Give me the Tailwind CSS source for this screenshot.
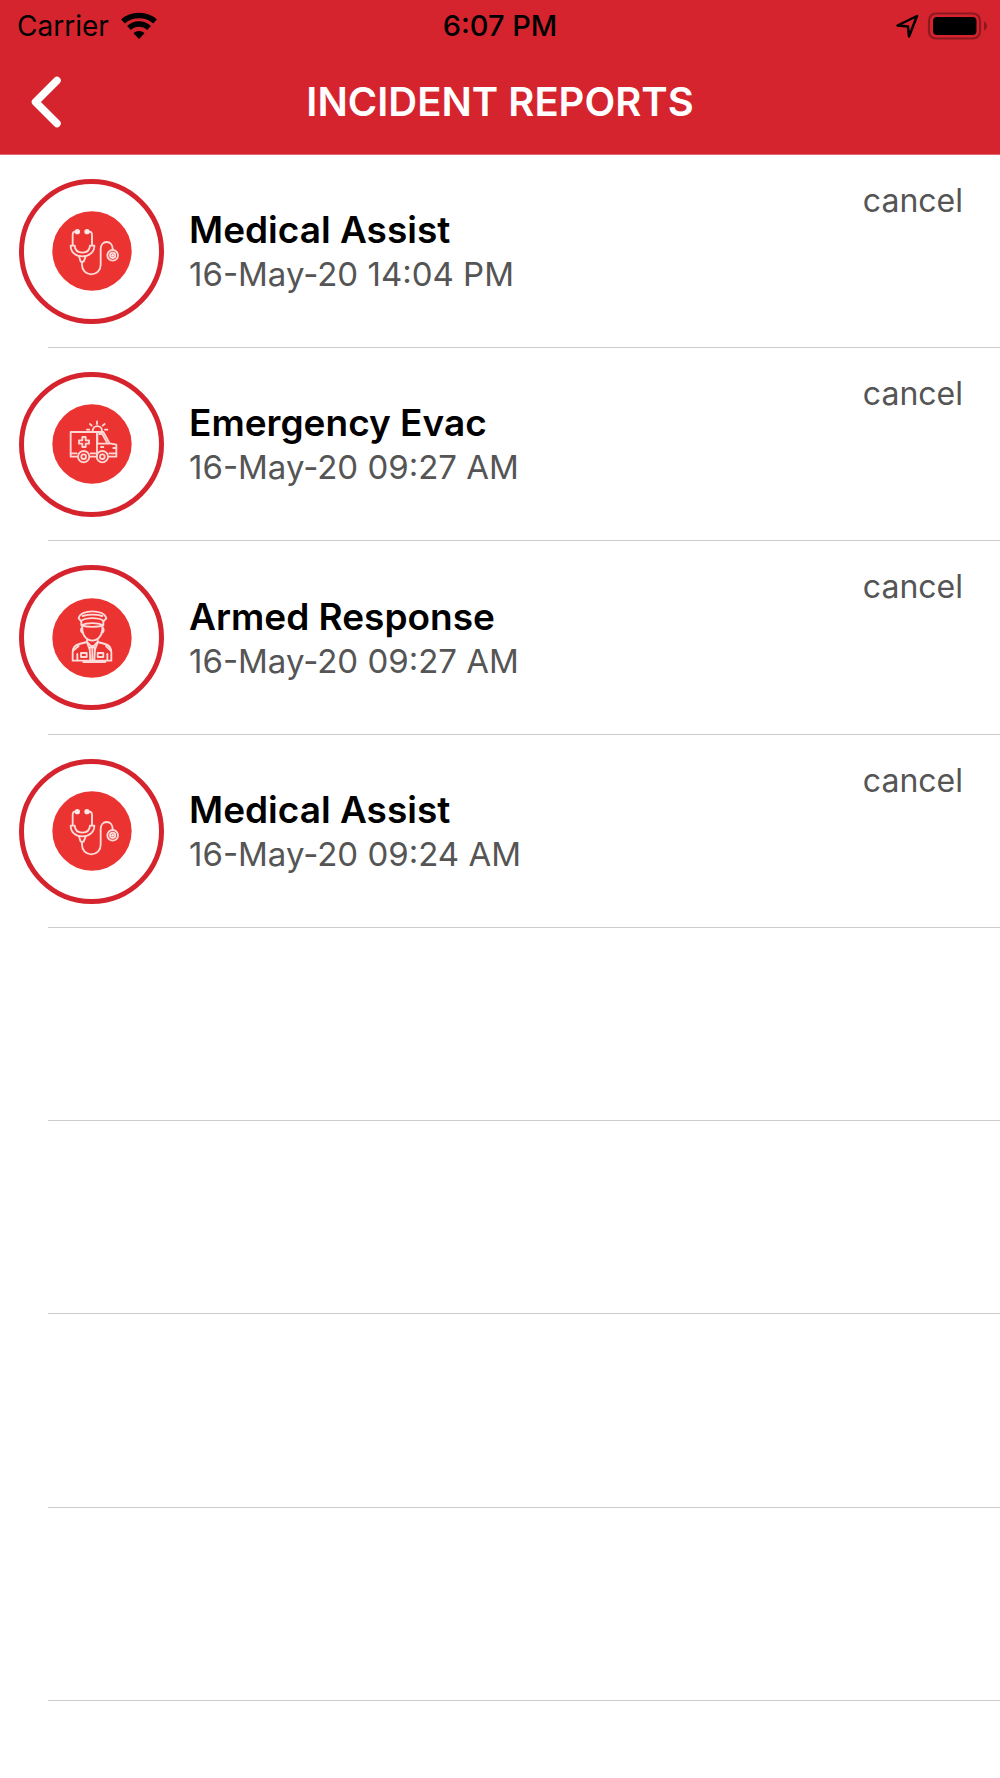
<!DOCTYPE html>
<html lang="en">
<head>
<meta charset="utf-8">
<meta name="viewport" content="width=device-width, initial-scale=1">
<title>Incident Reports</title>
<script src="https://cdn.jsdelivr.net/npm/@tailwindcss/browser@4"></script>
</head>
<body class="min-h-screen overflow-x-hidden bg-white font-[Inter,sans-serif] text-black">

<!-- Shared icon artwork -->
<svg class="hidden" aria-hidden="true">
  <symbol id="stethoscope" viewBox="36 35 240 240">
    <circle cx="156" cy="155" r="119" fill="#eb3431"/>
    <g fill="none" stroke="#ffdcda" stroke-width="5.500" stroke-linecap="round" stroke-linejoin="round">
      <path d="M110 97H105Q98 97 98 107V138M142 97H148Q156 97 156 107V138"/>
      <path d="M92 139H104C105 153 114 160 127 160S149 153 150 139H163C163 158 148 171 127 171S92 158 92 139Z"/>
      <path d="M117 171L122 187H131L137 171M126 188V196C126 213 138 225 154 225S182 213 182 196V149C182 137 189 128 200 128S218 137 218 149V151"/>
      <circle cx="218" cy="168" r="16"/><circle cx="218" cy="168" r="8"/>
    </g>
    <g fill="#ffe9e8"><circle cx="112" cy="97" r="8"/><circle cx="141" cy="97" r="8"/><circle cx="218" cy="168" r="4"/></g>
  </symbol>
  <symbol id="ambulance" viewBox="36 30 240 240">
    <circle cx="156" cy="150" r="119" fill="#eb3431"/>
    <g fill="none" stroke="#ffd8d5" stroke-width="5.500" stroke-linecap="round" stroke-linejoin="round">
      <path d="M112 188H92V114H171V188H150M170 114H190L209 148L229 152V188H206M150 188H168"/>
      <path d="M172 120V149H207M178 120H187L202 148M92 178H110M152 178H166M208 178H228"/>
      <path d="M127 129H137V139H147V149H137V159H127V149H117V139H127Z"/>
      <path d="M158 112C158 91 186 91 186 112M171 90V82M155 95L150 90M188 95L194 90M148 107H141M195 107H202"/>
      <path d="M183 159H190M220 162H228"/>
      <circle cx="131" cy="188" r="17"/><circle cx="131" cy="188" r="7"/>
      <circle cx="187" cy="188" r="17"/><circle cx="187" cy="188" r="7"/>
    </g>
  </symbol>
  <symbol id="officer" viewBox="36 30 240 240">
    <circle cx="156" cy="150" r="119" fill="#eb3431"/>
    <g fill="none" stroke="#ffdcda" stroke-width="5.500" stroke-linecap="round" stroke-linejoin="round">
      <path d="M124 100L116 91C119 76 139 70 157 70S195 76 199 91L190 100"/>
      <path d="M124 98C140 88 175 88 190 98V112C173 103 141 103 124 112ZM128 84C145 79 170 79 187 84M124 112C142 118 172 118 190 112"/>
      <path d="M127 115V126C129 147 143 158 157 158S185 147 187 126V115M126 118C120 126 123 133 130 135M188 118C194 126 191 133 184 135"/>
      <path d="M141 154V162L157 179L173 162V154M141 162L118 168C103 172 98 180 98 193V218H214V193C214 180 209 172 195 168L173 162"/>
      <path d="M141 163L148 182L157 174L166 182L173 163M157 180V216M149 182L151 216M165 182L163 216M100 188L116 174M212 188L198 174M112 198V217M202 198V217"/>
      <path d="M123 195H140V207H123ZM173 195H190V207H173ZM130 222H196"/>
    </g>
  </symbol>
</svg>

<header class="h-[155px] border-b border-[#e2666f] bg-[#d6242f]">
  <div class="grid h-[51px] grid-cols-3 items-center px-[13px]">
    <div class="flex items-center gap-3 pl-1">
      <span class="text-[28px] leading-8">Carrier</span>
      <svg class="h-7 w-9" viewBox="0 0 36 28" fill="none" stroke="#000" stroke-width="5.500" role="img" aria-label="Wi-Fi">
        <path d="M2 9.500C10.500 1.500 25.500 1.500 34 9.500M8 16C13.500 10.500 22.500 10.500 28 16"/>
        <path d="M12.500 21.200C15.500 18.200 20.500 18.200 23.500 21.200L18 27Z" fill="#000" stroke="none"/>
      </svg>
    </div>
    <span class="text-center text-[29px] leading-8 font-medium">6:07 PM</span>
    <div class="flex items-center justify-end gap-2">
      <svg class="h-6 w-6" viewBox="0 0 24 24" fill="none" stroke="#000" stroke-width="2.500" stroke-linejoin="round" role="img" aria-label="Location">
        <path d="M22 2L2.500 11.500L13 12.500L14 22.500Z"/>
      </svg>
      <svg class="h-7 w-[60px]" viewBox="0 0 60 28" role="img" aria-label="Battery full">
        <rect x="2" y="1.500" width="51" height="25" rx="7" fill="none" stroke="#8d1820" stroke-width="2.200"/>
        <rect x="6" y="5" width="43.500" height="18" rx="4"/>
        <path d="M57 9.500Q60 11 60 14T57 18.500Z" fill="#8d1820"/>
      </svg>
    </div>
  </div>
  <div class="grid h-[102px] grid-cols-[100px_1fr_100px] items-center">
    <button type="button" aria-label="Back" class="pl-[30px]">
      <svg class="h-[52px] w-8" viewBox="0 0 32 52" fill="none" stroke="#fff" stroke-width="7.500" stroke-linecap="round" stroke-linejoin="round"><path d="M27 4.500L5.500 26L27 47.500"/></svg>
    </button>
    <h1 class="text-center text-[40px] leading-12 font-semibold text-white">INCIDENT REPORTS</h1>
  </div>
</header>

<main>
  <ul>
    <li class="ml-12 flex h-[193px] items-center border-b border-[#cbcbcd] pr-[37px]">
      <span class="-ml-[29px] flex size-[145px] shrink-0 items-center justify-center rounded-full border-5 border-[#d6242f]"><svg class="size-20" aria-hidden="true"><use href="#stethoscope"/></svg></span>
      <div class="ml-[25px] grow pt-0.5">
        <h2 class="text-[37px] leading-[44px] font-semibold">Medical Assist</h2>
        <p class="text-[33px] leading-[44px] text-[#555]">16-May-20 14:04 PM</p>
      </div>
      <button type="button" class="mt-6 self-start text-[32px] leading-[44px] text-[#555]">cancel</button>
    </li>
    <li class="ml-12 flex h-[193px] items-center border-b border-[#cbcbcd] pr-[37px]">
      <span class="-ml-[29px] flex size-[145px] shrink-0 items-center justify-center rounded-full border-5 border-[#d6242f]"><svg class="size-20" aria-hidden="true"><use href="#ambulance"/></svg></span>
      <div class="ml-[25px] grow pt-0.5">
        <h2 class="text-[37px] leading-[44px] font-semibold">Emergency Evac</h2>
        <p class="text-[33px] leading-[44px] text-[#555]">16-May-20 09:27 AM</p>
      </div>
      <button type="button" class="mt-6 self-start text-[32px] leading-[44px] text-[#555]">cancel</button>
    </li>
    <li class="ml-12 flex h-[194px] items-center border-b border-[#cbcbcd] pr-[37px]">
      <span class="-ml-[29px] flex size-[145px] shrink-0 items-center justify-center rounded-full border-5 border-[#d6242f]"><svg class="size-20" aria-hidden="true"><use href="#officer"/></svg></span>
      <div class="ml-[25px] grow pt-0.5">
        <h2 class="text-[37px] leading-[44px] font-semibold">Armed Response</h2>
        <p class="text-[33px] leading-[44px] text-[#555]">16-May-20 09:27 AM</p>
      </div>
      <button type="button" class="mt-6 self-start text-[32px] leading-[44px] text-[#555]">cancel</button>
    </li>
    <li class="ml-12 flex h-[193px] items-center border-b border-[#cbcbcd] pr-[37px]">
      <span class="-ml-[29px] flex size-[145px] shrink-0 items-center justify-center rounded-full border-5 border-[#d6242f]"><svg class="size-20" aria-hidden="true"><use href="#stethoscope"/></svg></span>
      <div class="ml-[25px] grow pt-0.5">
        <h2 class="text-[37px] leading-[44px] font-semibold">Medical Assist</h2>
        <p class="text-[33px] leading-[44px] text-[#555]">16-May-20 09:24 AM</p>
      </div>
      <button type="button" class="mt-6 self-start text-[32px] leading-[44px] text-[#555]">cancel</button>
    </li>
  </ul>
  <!-- Empty rows below the last report -->
  <div aria-hidden="true">
    <div class="ml-12 h-[193px] border-b border-[#cbcbcd]"></div>
    <div class="ml-12 h-[193px] border-b border-[#cbcbcd]"></div>
    <div class="ml-12 h-[194px] border-b border-[#cbcbcd]"></div>
    <div class="ml-12 h-[193px] border-b border-[#cbcbcd]"></div>
  </div>
</main>
</body>
</html>
